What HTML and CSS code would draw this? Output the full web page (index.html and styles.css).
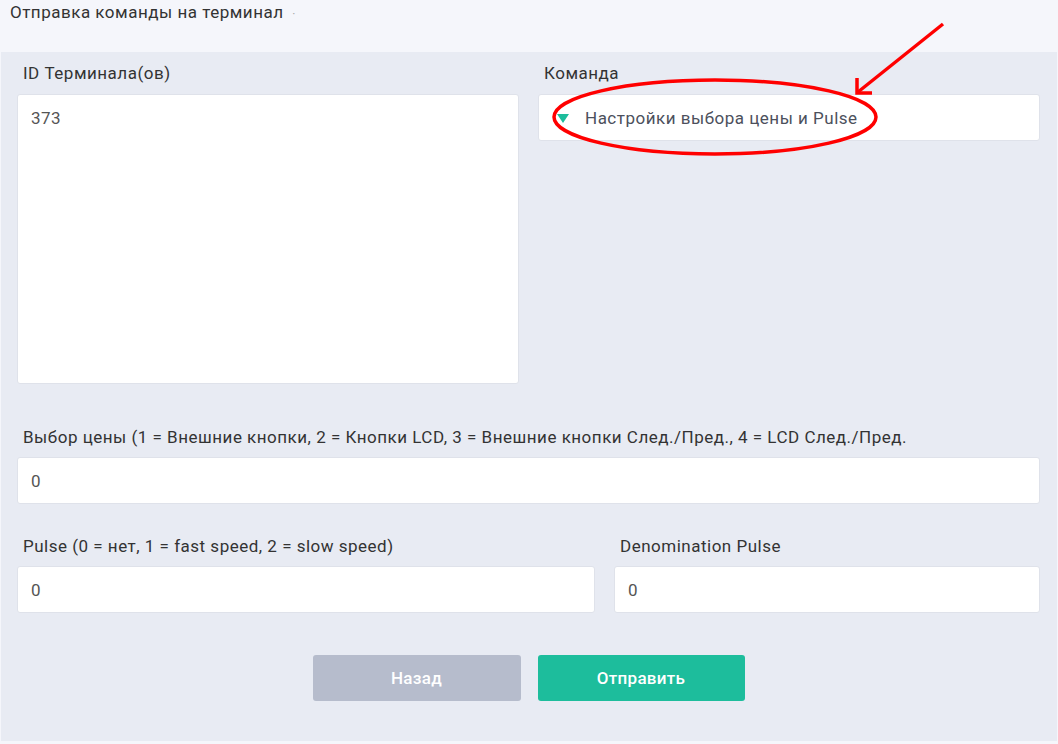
FILE: index.html
```html
<!DOCTYPE html>
<html lang="ru">
<head>
    <meta charset="UTF-8">
    <title>Отправка команды на терминал</title>
    <link rel="stylesheet" href="styles.css">
</head>
<body>

    <div class="page-head">
        <span class="page-title">Отправка команды на терминал</span>
        <span class="title-dot">·</span>
    </div>

    <div class="panel">
        <div class="row row-half">
            <div class="field">
                <label>ID Терминала(ов)</label>
                <textarea class="control terminals">373</textarea>
            </div>
            <div class="field">
                <label>Команда</label>
                <div class="control select">
                    <span class="caret"></span>
                    <span>Настройки выбора цены и Pulse</span>
                </div>
            </div>
        </div>

        <div class="row row-full">
            <div class="field">
                <label>Выбор цены (1 = Внешние кнопки, 2 = Кнопки LCD, 3 = Внешние кнопки След./Пред., 4 = LCD След./Пред.</label>
                <input class="control" type="text" value="0">
            </div>
        </div>

        <div class="row row-pulse">
            <div class="field">
                <label>Pulse (0 = нет, 1 = fast speed, 2 = slow speed)</label>
                <input class="control" type="text" value="0">
            </div>
            <div class="field">
                <label>Denomination Pulse</label>
                <input class="control" type="text" value="0">
            </div>
        </div>

        <div class="actions">
            <button class="btn btn-back">Назад</button>
            <button class="btn btn-send">Отправить</button>
        </div>
    </div>

    <!-- пометки поверх скриншота -->
    <svg class="marks" width="1058" height="744" viewBox="0 0 1058 744">
        <ellipse cx="715" cy="117" rx="161" ry="37" fill="none" stroke="#f00" stroke-width="3.5"/>
        <path d="M943 24 L858 92" stroke="#f00" stroke-width="3.5" fill="none"/>
        <path d="M857 78 L857 93 L872 93" stroke="#f00" stroke-width="3.5" fill="none"/>
    </svg>

</body>
</html>
```

FILE: styles.css
```css
body {
    margin: 0;
    background-color: #f5f6fb;
    font-family: Roboto, "Liberation Sans", Arial, sans-serif;
    font-size: 17px;
    letter-spacing: 0.5px;
    color: #333;
    position: relative;
    width: 1058px;
    height: 744px;
    overflow: hidden;
}

.page-head {
    height: 52px;
    padding: 1px 0 0 10px;
    box-sizing: border-box;
    line-height: 22px;
}

.title-dot {
    color: #aaa;
    font-size: 12px;
    margin-left: 4px;
}

.panel {
    margin-left: 1px;
    width: 1056px;
    background-color: #e8ebf3;
    padding: 10px 17px 40px 16px;
    box-sizing: border-box;
}

.row {
    display: grid;
    column-gap: 19px;
}

.row-half {
    grid-template-columns: 502px 502px;
}

.row-full {
    margin-top: 42px;
}

.row-pulse {
    grid-template-columns: 578px 1fr;
    margin-top: 31px;
}

.field label {
    display: block;
    padding-left: 6px;
    line-height: 22px;
    margin-bottom: 9px;
    white-space: nowrap;
}

.row-half .field label {
    margin-bottom: 10px;
}

.control {
    display: block;
    width: 100%;
    box-sizing: border-box;
    height: 47px;
    background-color: #fff;
    border: 1px solid #dfe2ea;
    border-radius: 3px;
    padding: 0 13px;
    font-family: inherit;
    font-size: 17px;
    letter-spacing: 0.5px;
    color: #555;
    outline: none;
}

.terminals {
    height: 290px;
    padding-top: 12px;
    line-height: 22px;
    resize: none;
}

.select {
    display: flex;
    align-items: center;
    padding-left: 18px;
    color: #4c505c;
}

.caret {
    width: 0;
    height: 0;
    border-left: 6px solid transparent;
    border-right: 6px solid transparent;
    border-top: 9px solid #1dbd9c;
    margin-right: 16px;
    margin-top: 1px;
}

.actions {
    display: flex;
    justify-content: center;
    gap: 17px;
    margin-top: 42px;
}

.btn {
    width: 208px;
    height: 46px;
    border: none;
    border-radius: 3px;
    color: #fff;
    font-family: inherit;
    font-size: 17px;
    letter-spacing: 0.3px;
    font-weight: 500;
    cursor: pointer;
}

.btn-back {
    background-color: #b6bccc;
}

.btn-send {
    background-color: #1dbd9c;
    width: 207px;
}

.marks {
    position: absolute;
    top: 0;
    left: 0;
    pointer-events: none;
}
```
